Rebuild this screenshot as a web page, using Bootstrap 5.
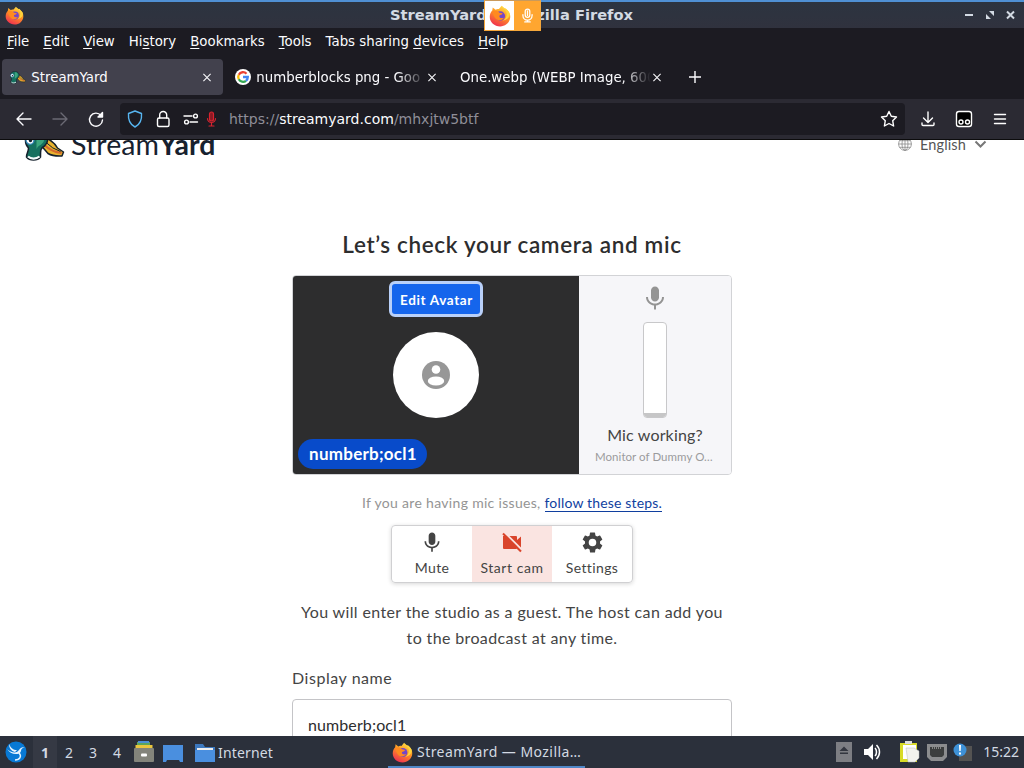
<!DOCTYPE html>
<html lang="en">
<head>
    <meta charset="UTF-8">
    <meta name="viewport" content="width=device-width, initial-scale=1.0">
    <title>StreamYard — Mozilla Firefox</title>
    <link href="https://cdn.jsdelivr.net/npm/bootstrap@5.3.0/dist/css/bootstrap.min.css" rel="stylesheet">
    <style>
        body { height: 768px; overflow: hidden; font-family: "DejaVu Sans", sans-serif; font-size: 13.33px; line-height: 18px; }
        svg { display: block; flex-shrink: 0; }
        .line { fill: none; stroke: currentColor; stroke-width: 1.4; stroke-linecap: round; stroke-linejoin: round; }

        /* window frame */
        .titlebar { height: 28px; background: linear-gradient(#2c3440, #30323e); border-top: 2px solid #4f90d4; color: #d3dae3; padding: 0 9px 0 5px; }
        .window-title { font-size: 14.67px; padding-left: 34px; }
        .share-box { left: 484px; top: 0; width: 57px; height: 31px; border: 1px solid #f5a73b; border-top-color: #c99a5c; z-index: 5; }
        .share-box > div { height: 29px; }
        .share-mic { width: 26px; background: #ffa630; }
        .menubar { height: 26px; background: #1c1b22; color: #fbfbfe; padding: 2px 0 0 7px; gap: 14px; }
        .menubar u { text-underline-offset: 2px; }
        .tabstrip { height: 45px; background: #1c1b22; color: #fbfbfe; padding: 5px 2px 4px; }
        .browser-tab { height: 36px; width: 221px; padding: 0 9px 0 8px; border-radius: 4px; }
        .browser-tab.current { background: #42414d; }
        .tab-label { white-space: nowrap; overflow: hidden; padding-top: 1px; }
        .fade-end { margin-right: -4px; -webkit-mask-image: linear-gradient(to left, transparent 3px, #000 32px); mask-image: linear-gradient(to left, transparent 3px, #000 32px); }
        .toolbar { height: 41px; background: #2b2a33; color: #fbfbfe; border-bottom: 1px solid #0c0c0d; }
        .urlbar { width: 785px; height: 32px; background: #1c1b22; border-radius: 4px; font-size: 14px; color: #8f8e98; }
        .urlbar b { font-weight: 400; color: #fbfbfe; }
        .url { padding-left: 3px; }

        /* page */
        .page { height: 596px; background: #fff; color: #444; font-family: Lato, sans-serif; overflow: hidden; }
        .page-top { height: 32px; padding-left: 24px; padding-right: 37px; }
        .brand-duck { margin-top: -11px; }
        .brand { font-size: 28.5px; line-height: 30px; color: #17212e; margin: -11px 0 0 6px; letter-spacing: .1px; }
        .lang { font-size: 14.5px; color: #555; margin-top: -4px; letter-spacing: .15px; }
        .studio { width: 440px; }
        .headline { font-size: 22.5px; line-height: 28px; font-weight: 600; color: #2d2d2e; margin: 59px 0 16px; letter-spacing: .65px; white-space: nowrap; }
        .preview { height: 200px; border: 1px solid #d2d3d6; border-radius: 4px; overflow: hidden; }
        .camera { width: 286px; background: #2d2d2e; padding: 5px; }
        .edit-avatar { width: 94px; height: 36px; border: 3px solid #b9d0f9; border-radius: 6px; background: #1565ec; color: #fff; font: 700 13.5px/30px Lato, sans-serif; padding: 1px 0 0 1px; letter-spacing: .65px; white-space: nowrap; }
        .avatar { width: 86px; height: 86px; margin-top: 15px; color: #979797; }
        .name-pill { width: 129px; height: 30px; border-radius: 15px; background: #084bca; color: #fff; font-size: 17px; font-weight: 700; line-height: 29px; letter-spacing: .25px; padding-left: 1px; }
        .mic-panel { background: #f6f6f9; padding-top: 10px; color: #949494; }
        .meter { width: 24px; height: 96px; border: 1px solid #c8c8ca; border-radius: 4px; background: #fff; margin-top: 11px; overflow: hidden; }
        .meter-level { height: 4px; background: #c6c6c7; }
        .mic-q { font-size: 16px; line-height: 20px; color: #444; margin-top: 7px; letter-spacing: .15px; }
        .mic-name { width: 120px; font-size: 11.5px; line-height: 16px; margin-top: 4px; color: #9b9b9d; letter-spacing: .05px; white-space: nowrap; }
        .hint { font-size: 14px; line-height: 20px; color: #949494; margin-top: 18px; letter-spacing: .31px; white-space: nowrap; }
        .hint a { color: #103f9f; text-decoration: none; letter-spacing: .17px; border-bottom: 1px solid #103f9f; }
        .controls { width: 242px; height: 58px; margin-top: 12px; border: 1px solid #d0d0d2; border-radius: 4px; box-shadow: 0 1px 4px rgba(0,0,0,.16); overflow: hidden; }
        .control { width: 80px; padding-top: 6px; font-size: 14px; line-height: 18px; letter-spacing: .38px; white-space: nowrap; }
        .control.off { background: #fae4e1; letter-spacing: .55px; }
        .control svg { margin-bottom: 6px; }
        .note { font-size: 16px; line-height: 26px; margin-top: 16px; letter-spacing: .37px; white-space: nowrap; }
        .field-label { font-size: 16px; line-height: 20px; margin-top: 17px; letter-spacing: .55px; }
        .field { height: 54px; margin-top: 11px; padding: 0 15px 4px; border: 1px solid #c4c4c7; border-radius: 4px; box-shadow: none; font: 16px Lato, sans-serif; letter-spacing: .1px; color: #2d2d2e; }

        /* panel */
        .taskbar { height: 32px; background: #2b303b; color: #d3dae3; font-family: "Noto Sans", sans-serif; font-size: 14px; line-height: 20px; }
        .desk { width: 24px; height: 32px; line-height: 34px; text-align: center; }
        .desk.here { background: #353944; }
        .folder-label { width: 56px; padding-top: 2px; letter-spacing: .15px; }
        .task { width: 197px; height: 30px; margin-left: 114px; padding-left: 4px; border-bottom: 2px solid #4f87c7; letter-spacing: .45px; }
        .clock { padding: 0 5px 0 4px; }
    </style>
</head>
<body>
    <svg width="0" height="0" class="position-absolute">
        <defs>
            <linearGradient id="fire" x1=".8" y1="0" x2=".3" y2="1">
                <stop offset="0" stop-color="#ffe94a"/><stop offset=".45" stop-color="#ff9322"/><stop offset="1" stop-color="#f02e52"/>
            </linearGradient>
            <symbol id="firefox" viewBox="0 0 20 20">
                <path fill="url(#fire)" d="M3 5l.4-2.800L6 4.300c1-.7 2-.8 3-.6L11.500.7c1 1.500 1.800 2 3 3l.5-.8c3 2.600 4.600 5.400 4.300 8.300-.4 5-4.500 8.300-9.200 8.300C5 19.500.7 15.700.7 10.900.7 8.500 1.500 6.500 3 5z"/>
                <circle cx="10.300" cy="10" r="4.300" fill="#7447c9"/>
                <path fill="#ff8a20" d="M3.500 5.500C6 4.800 8 5.300 9.500 7l3 .5c-.4 1.200-1.700 1.600-3 2-.6 2 1.500 3 4 2-1.400 2.800-5.500 3.200-7.500.8C4.200 10.500 3.300 8 3.500 5.500z"/>
                <path fill="#ffd43c" d="M11.500.7c1 3 5 4 5.200 8.800.2-2-.3-3.300-1.200-4.500 1.200 3 .7 7.500-3 9 4-.3 6.400-3 6.300-6.300C18 4.500 14 3.500 11.500.7z"/>
            </symbol>
            <symbol id="mic-solid" viewBox="0 0 24 24">
                <path fill="currentColor" d="M12 15c2.200 0 4-1.800 4-4V4c0-2.200-1.800-4-4-4S8 1.800 8 4v7c0 2.200 1.800 4 4 4zm7-4.500c0 4-3.300 6.500-7 6.500s-7-2.500-7-6.500H3c0 4.500 3.500 8 8 8.500v4h2v-4c4.500-.5 8-4 8-8.500z"/>
            </symbol>
            <symbol id="mic-line" viewBox="0 0 12 16">
                <rect x="3.500" y="1" width="5" height="9" rx="2.500" class="line"/>
                <path class="line" d="M1 7v1a5 5 0 0 0 10 0V7M6 13v2M3 15h6M6 3v5"/>
            </symbol>
            <symbol id="cross" viewBox="0 0 10 10"><path fill="none" stroke="currentColor" stroke-width="1.200" d="M1 1l8 8M9 1L1 9"/></symbol>
            <symbol id="duck" viewBox="0 0 40 32">
                <path fill="#e9b32f" stroke="#15202c" stroke-width="1.500" stroke-linejoin="round" d="M20 8q9 4 13 11l6 4-1.500 4q-9 .5-14-2.500l-6-7z"/>
                <path fill="none" stroke="#d7682c" stroke-width="2" d="M20 16q7 7 17 8"/>
                <path fill="none" stroke="#15202c" d="M21 13q7 7 15 9.500"/>
                <path fill="#15705f" stroke="#15202c" stroke-width="1.500" d="M2 28c0-4 2-5 2-9C0 15 0 8 4 4c5-5 14-4 17 1 4 5 2 9-1 12-4 2-4 4-4 11-3 4-11 4-14 0z"/>
                <path fill="#3ca57d" d="M12 3c6 0 9 4 7 10-3 4-5 3-7 7z"/>
                <path fill="none" stroke="#f2fafa" stroke-width="2.200" d="M3.500 27.500c3 2.700 8 2.700 11.500 0"/>
                <ellipse cx="5.500" cy="11" rx="4" ry="4.300" fill="#fff" stroke="#3486b8" stroke-width="1.300"/>
                <circle cx="6" cy="11.500" r="1.700" fill="#15202c"/>
            </symbol>
        </defs>
    </svg>

    <div class="titlebar d-flex align-items-center">
        <svg width="19" height="19"><use href="#firefox"/></svg>
        <div class="window-title flex-fill text-center fw-bold">StreamYard — Mozilla Firefox</div>
        <svg width="50" height="12" viewBox="0 0 50 12" fill="none" stroke="#d3dae3" stroke-width="2">
            <path d="M0 6h8M42 2.500l7 7M49 2.500l-7 7"/>
            <path fill="#d3dae3" stroke="none" d="M24 2h5v5zM21 5v5h5z"/>
        </svg>
    </div>
    <div class="share-box position-absolute d-flex">
        <div class="flex-fill bg-white d-flex align-items-center justify-content-center"><svg width="22" height="22"><use href="#firefox"/></svg></div>
        <div class="share-mic d-flex align-items-center justify-content-center text-white"><svg width="11" height="15"><use href="#mic-line"/></svg></div>
    </div>

    <div class="menubar d-flex align-items-center">
        <span><u>F</u>ile</span><span><u>E</u>dit</span><span><u>V</u>iew</span><span>Hi<u>s</u>tory</span><span><u>B</u>ookmarks</span><span><u>T</u>ools</span><span>Tabs sharing <u>d</u>evices</span><span><u>H</u>elp</span>
    </div>

    <div class="tabstrip d-flex align-items-center">
        <div class="browser-tab current d-flex align-items-center">
            <svg width="16" height="13" class="me-1"><use href="#duck"/></svg>
            <span class="tab-label flex-fill">&#8202;StreamYard</span>
            <svg width="14" height="9"><use href="#cross"/></svg>
        </div>
        <div class="browser-tab d-flex align-items-center ms-1">
            <svg width="16" height="16" viewBox="0 0 16 16">
                <circle cx="8" cy="8" r="8" fill="#fff"/>
                <g fill="none" stroke-width="2.300">
                    <path stroke="#ea4335" d="M3.800 5.700A4.800 4.800 0 0 1 11.500 4.700"/>
                    <path stroke="#fbbc05" d="M3.800 5.700a4.800 4.800 0 0 0 0 4.600"/>
                    <path stroke="#34a853" d="M3.800 10.300a4.800 4.800 0 0 0 7.200 1.500"/>
                    <path stroke="#4285f4" d="M11 11.800A4.800 4.800 0 0 0 12.800 8H8"/>
                </g>
            </svg>
            <span class="tab-label fade-end flex-fill ms-1">&#8202;numberblocks png - Goo</span>
            <svg width="14" height="9"><use href="#cross"/></svg>
        </div>
        <div class="browser-tab d-flex align-items-center ms-1">
            <span class="tab-label fade-end flex-fill">One.webp (WEBP Image, 600</span>
            <svg width="14" height="9"><use href="#cross"/></svg>
        </div>
        <svg width="12" height="12" viewBox="0 0 12 12" class="ms-3"><path class="line" d="M6 0v12M0 6h12"/></svg>
    </div>

    <div class="toolbar d-flex align-items-center">
        <svg width="120" height="32" viewBox="0 0 120 32" class="line">
            <path d="M31 16H17.500M23 10l-6 6 6 6"/>
            <path stroke="#6b6a74" d="M53 16h13.500M61 10l6 6-6 6"/>
            <path d="M101 12.500a6.500 6.500 0 1 0 1.500 4.500"/><path fill="currentColor" d="M102.500 9.500v4.500H98z"/>
        </svg>
        <div class="urlbar d-flex align-items-center">
            <svg width="98" height="20" viewBox="0 0 98 20" class="line me-2 text-white">
                <path stroke="#57b5f0" d="M15 2l6.500 2.500c.5 6-1.500 11-6.500 13.500C10 15.500 8 10.500 8.500 4.500z"/>
                <rect x="37.500" y="9" width="11.500" height="8.500" rx="1.500"/>
                <path d="M39.700 9V6a3.500 3.500 0 0 1 7 0v3"/>
                <circle cx="75.500" cy="7" r="1.900"/><circle cx="66.500" cy="13" r="1.900"/>
                <path d="M64 7h8M70 13h7.500"/>
                <g stroke="#d7232f" stroke-width="1.200"><rect x="89.500" y="3" width="4" height="9" rx="2" fill="#8a1a24"/><path d="M87.500 9.500a4 4 0 0 0 8 0M91.500 14v3M89 17h5"/></g>
            </svg>
            <span class="url flex-fill">https://<b>streamyard.com</b>/mhxjtw5btf</span>
            <svg width="18" height="18" viewBox="0 0 18 18" class="line text-white" style="margin-right:7px"><path d="M9 1.500l2.300 4.800 5.200.7-3.800 3.700.9 5.300L9 13.500 4.400 16l.9-5.300L1.500 7l5.200-.7z"/></svg>
        </div>
        <svg width="119" height="32" viewBox="0 0 119 32" class="line text-white">
            <path d="M23 9v10M18.500 15l4.500 4.500 4.500-4.500M17 20v1.500q0 1 1 1h10q1 0 1-1V20"/>
            <rect x="51.500" y="8.500" width="15" height="15" rx="2.500" fill="#000"/>
            <circle cx="56" cy="19" r="2"/><circle cx="62.500" cy="19" r="2"/>
            <path d="M89.500 11.500h11M89.500 16h11M89.500 20.500h11"/>
        </svg>
    </div>

    <main class="page">
        <div class="page-top d-flex justify-content-between">
            <div class="d-flex">
                <svg width="41" height="32" class="brand-duck"><use href="#duck"/></svg>
                <div class="brand">Stream<b>Yard</b></div>
            </div>
            <div class="lang d-flex">
                <svg width="14" height="14" viewBox="0 0 14 14" class="me-2" style="margin-top:1px" fill="none" stroke="#888" stroke-width=".8"><circle cx="7" cy="7" r="6.400"/><ellipse cx="7" cy="7" rx="3" ry="6.400"/><path d="M.5 7h13M1.500 3.700h11M1.500 10.300h11M7 .5v13"/></svg>
                <span>English</span>
                <svg width="13" height="9" viewBox="0 0 13 9" class="ms-2 mt-1" fill="none" stroke="#777" stroke-width="2"><path d="M1.500 1.500l5 5 5-5"/></svg>
            </div>
        </div>

        <div class="studio mx-auto d-flex flex-column align-items-center">
            <h1 class="headline">Let’s check your camera and mic</h1>
            <div class="preview d-flex w-100">
                <div class="camera d-flex flex-column align-items-center">
                    <button class="edit-avatar">Edit Avatar</button>
                    <div class="avatar rounded-circle bg-white d-flex align-items-center justify-content-center">
                        <svg width="28" height="28" viewBox="0 0 28 28"><circle cx="14" cy="14" r="14" fill="currentColor"/><circle cx="14" cy="8.500" r="4.300" fill="#fff"/><ellipse cx="14" cy="20" rx="8.200" ry="4.500" fill="#fff"/></svg>
                    </div>
                    <div class="name-pill text-center align-self-start mt-auto">numberb;ocl1</div>
                </div>
                <div class="mic-panel flex-fill d-flex flex-column align-items-center">
                    <svg width="24" height="25"><use href="#mic-solid"/></svg>
                    <div class="meter d-flex flex-column justify-content-end"><div class="meter-level"></div></div>
                    <div class="mic-q">Mic working?</div>
                    <div class="mic-name">Monitor of Dummy O…</div>
                </div>
            </div>
            <div class="hint">If you are having mic issues, <a href="#">follow these steps.</a></div>
            <div class="controls d-flex">
                <div class="control d-flex flex-column align-items-center"><svg width="20" height="21"><use href="#mic-solid"/></svg>Mute</div>
                <div class="control off d-flex flex-column align-items-center">
                    <svg width="20" height="21" viewBox="0 0 20 21"><path fill="#d9442b" d="M1 4h13q1 0 1 1v3l4-3.500v12L15 13v3q0 1-1 1H2q-1 0-1-1z"/><path stroke="#fae4e1" stroke-width="2" d="M2.500.5l18 18"/><path stroke="#d9442b" stroke-width="2" d="M1 1.500l18 18"/></svg>
                    Start cam
                </div>
                <div class="control d-flex flex-column align-items-center">
                    <svg width="21" height="21" viewBox="2 2 20 20"><path fill="#444" d="M19.140 12.940a7 7 0 0 0 0-1.880l2.030-1.580a.5.5 0 0 0 .12-.61l-1.920-3.320a.5.5 0 0 0-.59-.22l-2.390.96a7 7 0 0 0-1.620-.94l-.36-2.540A.5.5 0 0 0 13.920 2.400h-3.840a.5.5 0 0 0-.47.41l-.36 2.540a7 7 0 0 0-1.620.94l-2.390-.96a.5.5 0 0 0-.59.22L2.740 8.870a.5.5 0 0 0 .12.610l2.030 1.580a7 7 0 0 0 0 1.880l-2.030 1.580a.5.5 0 0 0-.12.610l1.920 3.320c.12.220.370.290.590.220l2.390-.96a7 7 0 0 0 1.620.94l.36 2.540c.05.240.240.410.480.410h3.840a.5.500 0 0 0 .47-.41l.36-2.540a7 7 0 0 0 1.620-.94l2.390.96c.220.080.470 0 .59-.22l1.920-3.320a.5.5 0 0 0-.12-.61zM12 15.600a3.600 3.600 0 1 1 0-7.200 3.600 3.600 0 0 1 0 7.200z"/></svg>
                    Settings
                </div>
            </div>
            <div class="note text-center">You will enter the studio as a guest. The host can add you<br>to the broadcast at any time.</div>
            <label class="field-label align-self-start" for="displayName">Display name</label>
            <input id="displayName" class="field form-control flex-shrink-0" value="numberb;ocl1">
        </div>
    </main>

    <footer class="taskbar d-flex align-items-center">
        <svg width="33" height="32" viewBox="0 0 33 32"><circle cx="16" cy="16" r="10.500" fill="#0879d5"/><path fill="#e7f4ff" d="M7 13c3 3 7 4 10 3l2-2c1-2 3-3 6-3-3 1-4 2-4 4-1 3-3 3-5 3-4 0-7-2-9-5zM9 8c2 4 4 6 8 6l-2 2C11 15 9 12 9 8z"/><path fill="none" stroke="#e7f4ff" stroke-width="1.400" d="M19 17c3 3 1 7-4 7"/></svg>
        <div class="desk here fw-bold">1</div><div class="desk">2</div><div class="desk">3</div><div class="desk">4</div>
        <svg width="89" height="32" viewBox="0 0 89 32">
            <path fill="#5ba55b" d="M8 6h13v4H8z"/><path fill="#4a8fd6" d="M9 5h11v2H9z"/><path fill="#e9c63e" d="M6.500 9h17v4h-17z"/>
            <rect x="5" y="12" width="20" height="14" rx="1" fill="#83847b"/><rect x="12" y="17.500" width="6" height="3" rx="1" fill="#fff"/>
            <path fill="#4a8fdf" d="M34 9h20v17h-3l-1-2H38l-1 2h-3z"/>
            <path fill="#3c78be" d="M66 8h8l2 3h10v15H66z"/><path fill="#eee" d="M68 12h16v2H68z"/><path fill="#4a8fdf" d="M66 14h20v12H66z"/>
        </svg>
        <span class="folder-label">Internet</span>
        <div class="task d-flex align-items-center align-self-end">
            <svg width="21" height="21" class="me-1"><use href="#firefox"/></svg><span>StreamYard — Mozilla…</span>
        </div>
        <svg width="144" height="32" viewBox="0 0 144 32" class="ms-auto">
            <rect x="1" y="6" width="16" height="20" fill="#7d7e83"/><path fill="#33363f" d="M4.500 15L9 10.500l4.500 4.500zM5 16.500h8V18H5z"/>
            <path fill="#fff" d="M29 13h4l5-5v16l-5-5h-4z"/><path fill="none" stroke="#fff" stroke-width="1.500" d="M40 12c2 2 2 6 0 8M41.500 9c4 4 4 10 0 14"/>
            <path fill="#d8da27" d="M65 7h17v19H65z"/><path fill="#fff" d="M68 9h13v14H68z"/><path fill="#ddd" d="M70 5h7v3h-7z"/><path fill="#f2f2ed" stroke="#bbb" stroke-width=".5" d="M71 12h8l5 3v7l-4 4h-7z"/>
            <path fill="#8b8c8e" d="M92 8h20v13l-4 4H96l-4-4z"/><path fill="#3c3e3e" d="M95 11h14v8l-2 2H97l-2-2z"/><path stroke="#ccc" stroke-dasharray="1 1" d="M97 12h10"/>
            <path fill="#545352" d="M124 10h13v15h-13z"/><circle cx="125" cy="14" r="6.500" fill="#3e91d7"/><path fill="#fff" d="M124 9h2l-.3 6h-1.400zM124 16.500h2v2h-2z"/>
        </svg>
        <span class="clock">15:22</span>
    </footer>

    <script src="https://cdn.jsdelivr.net/npm/bootstrap@5.3.0/dist/js/bootstrap.bundle.min.js"></script>
</body>
</html>
